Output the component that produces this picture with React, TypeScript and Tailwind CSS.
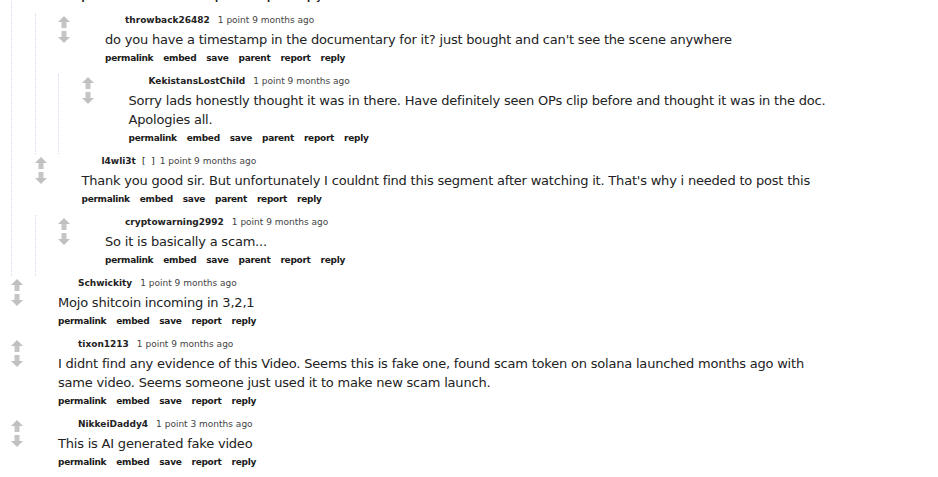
import React from "react";

type CommentData = {
  author: string;
  age: string;
  body: string[];
  flair?: boolean;
  parent?: boolean;
  replies?: CommentData[];
};

const thread: CommentData[] = [
  {
    author: "l4wli3t",
    flair: true,
    age: "9 months",
    parent: true,
    body: ["Thank you good sir. But unfortunately I couldnt find this segment after watching it. That's why i needed to post this"],
    replies: [
      {
        author: "cryptowarning2992",
        age: "9 months",
        parent: true,
        body: ["So it is basically a scam..."],
      },
    ],
  },
];

const topLevel: CommentData[] = [
  { author: "Schwickity", age: "9 months", body: ["Mojo shitcoin incoming in 3,2,1"] },
  {
    author: "tixon1213",
    age: "9 months",
    body: [
      "I didnt find any evidence of this Video. Seems this is fake one, found scam token on solana launched months ago with",
      "same video. Seems someone just used it to make new scam launch.",
    ],
  },
  { author: "NikkeiDaddy4", age: "3 months", body: ["This is AI generated fake video"] },
];

const cutOffReplies: CommentData[] = [
  {
    author: "throwback26482",
    age: "9 months",
    parent: true,
    body: ["do you have a timestamp in the documentary for it? just bought and can't see the scene anywhere"],
    replies: [
      {
        author: "KekistansLostChild",
        age: "9 months",
        parent: true,
        body: [
          "Sorry lads honestly thought it was in there. Have definitely seen OPs clip before and thought it was in the doc.",
          "Apologies all.",
        ],
      },
    ],
  },
];

function UpArrow() {
  return (
    <svg width="12" height="12" viewBox="0 0 12 12">
      <polygon points="6,0 12,6 0,6" fill="#c0c0c0" />
      <rect x="3.5" y="6" width="5" height="6" fill="#c6c6c6" />
    </svg>
  );
}

function DownArrow() {
  return (
    <svg width="12" height="12" viewBox="0 0 12 12">
      <rect x="3.5" y="0" width="5" height="6" fill="#c6c6c6" />
      <polygon points="0,6 12,6 6,12" fill="#c0c0c0" />
    </svg>
  );
}

function Buttons({ parent }: { parent?: boolean }) {
  const items = parent
    ? ["permalink", "embed", "save", "parent", "report", "reply"]
    : ["permalink", "embed", "save", "report", "reply"];
  return (
    <ul className="flex gap-[10px] text-[9px] leading-[12px] font-bold tracking-[-0.3px] text-[#1a1a1a]">
      {items.map((b) => (
        <li key={b}>{b}</li>
      ))}
    </ul>
  );
}

function Comment({ c }: { c: CommentData }) {
  return (
    <div>
      <div className="flex pb-[10px]">
        {/* vote arrows */}
        <div className="w-[47px] shrink-0 pt-[3px] flex flex-col gap-[3px]">
          <UpArrow />
          <DownArrow />
        </div>

        <div className="min-w-0">
          <p className="pt-px pl-[20px] text-[9px] leading-[12px] text-[#444] whitespace-nowrap">
            <span className="font-bold text-[#222]">{c.author}</span>
            {c.flair && <span className="ml-[6px] text-[#222]">[&nbsp;&nbsp;]</span>}
            <span className={c.flair ? "ml-[5px]" : "ml-[8px]"}>1 point {c.age} ago</span>
          </p>
          <div className="mt-[4px] text-[13px] leading-[19px] tracking-[-0.2px] text-[#222] whitespace-nowrap">
            {c.body.map((line, i) => (
              <div key={i}>{line}</div>
            ))}
          </div>
          <div className="mt-[3px]">
            <Buttons parent={c.parent} />
          </div>
        </div>
      </div>

      {c.replies && (
        <div className="border-l border-dotted border-[#d8d8f6] pl-[22.5px]">
          {c.replies.map((r) => (
            <Comment key={r.author} c={r} />
          ))}
        </div>
      )}
    </div>
  );
}

export default function App() {
  return (
    <div className="h-[477px] w-[938px] overflow-hidden bg-white font-[family-name:'DejaVu_Sans',Verdana,sans-serif]">
      <div className="-mt-[9px] pl-[11px]">
        {/* children of the top-level comment above */}
        <div className="border-l border-dotted border-[#d8d8f6] pl-[22.5px]">
          <div>
            <div className="pl-[47px] pb-[10px]">
              <Buttons parent />
            </div>
            <div className="border-l border-dotted border-[#d8d8f6] pl-[22.5px]">
              {cutOffReplies.map((c) => (
                <Comment key={c.author} c={c} />
              ))}
            </div>
          </div>
          {thread.map((c) => (
            <Comment key={c.author} c={c} />
          ))}
        </div>

        {topLevel.map((c) => (
          <Comment key={c.author} c={c} />
        ))}
      </div>
    </div>
  );
}
